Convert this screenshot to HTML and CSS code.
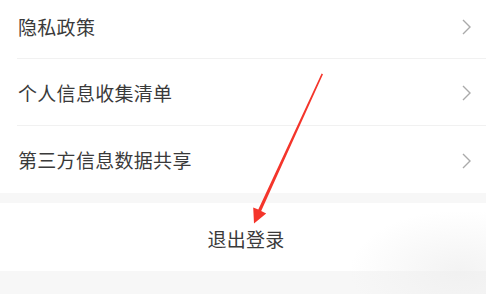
FILE: index.html
```html
<!DOCTYPE html>
<html lang="zh">
<head>
<meta charset="utf-8">
<link rel="stylesheet" href="styles.css">
</head>
<body>
<div class="page">
  <div class="list">
    <div class="row"><span class="label">隐私政策</span><svg class="chev" width="9" height="16" viewBox="0 0 9 16"><path d="M1 1 L8 8 L1 15" fill="none" stroke="#aaa" stroke-width="1.4"/></svg></div>
    <div class="row"><span class="label">个人信息收集清单</span><svg class="chev" width="9" height="16" viewBox="0 0 9 16"><path d="M1 1 L8 8 L1 15" fill="none" stroke="#aaa" stroke-width="1.4"/></svg></div>
    <div class="row last"><span class="label">第三方信息数据共享</span><svg class="chev" width="9" height="16" viewBox="0 0 9 16"><path d="M1 1 L8 8 L1 15" fill="none" stroke="#aaa" stroke-width="1.4"/></svg></div>
  </div>
  <div class="logout">退出登录</div>
  <div class="blur"></div>
  <svg class="arrow" width="486" height="294" viewBox="0 0 486 294">
    <polygon points="321.6,73.5 323,74.3 261.2,211 266.2,213.4 254,223.5 253.2,207.4 258.3,209.6" fill="#f4352b"/>
  </svg>
</div>
</body>
</html>
```
FILE: styles.css
```css
html, body { margin: 0; padding: 0; }
body {
  width: 486px;
  height: 294px;
  overflow: hidden;
  background: #f7f7f7;
  font-family: "Noto Sans CJK SC", "Noto Sans", sans-serif;
  color: #3a3a3a;
}
.page { position: relative; width: 486px; height: 294px; overflow: hidden; }
.list { margin-top: -8px; background: #fff; }
.row {
  height: 67px;
  margin-left: 17px;
  padding-right: 21px;
  margin-right: -6px;
  display: flex;
  align-items: center;
  justify-content: space-between;
  border-bottom: 1px solid #f1f1f1;
  box-sizing: border-box;
}
.row.last { border-bottom: none; }
.row .chev { margin-top: 2px; }
.row:first-child .label, .row:first-child .chev { position: relative; top: 1px; }
.label { font-size: 19px; letter-spacing: 0.3px; padding-left: 1px; }
.logout {
  margin-top: 10px;
  height: 68px;
  background: #fff;
  display: flex;
  align-items: center;
  justify-content: center;
  font-size: 19px;
  letter-spacing: 0.3px;
  padding-left: 6px;
  padding-top: 3px;
  box-sizing: border-box;
}
.blur {
  position: absolute;
  left: 340px;
  top: 205px;
  width: 200px;
  height: 110px;
  background: radial-gradient(ellipse at 60% 60%, rgba(238,238,238,0.7), rgba(247,247,247,0) 65%);
  pointer-events: none;
}
.arrow { position: absolute; left: 0; top: 0; }
```
